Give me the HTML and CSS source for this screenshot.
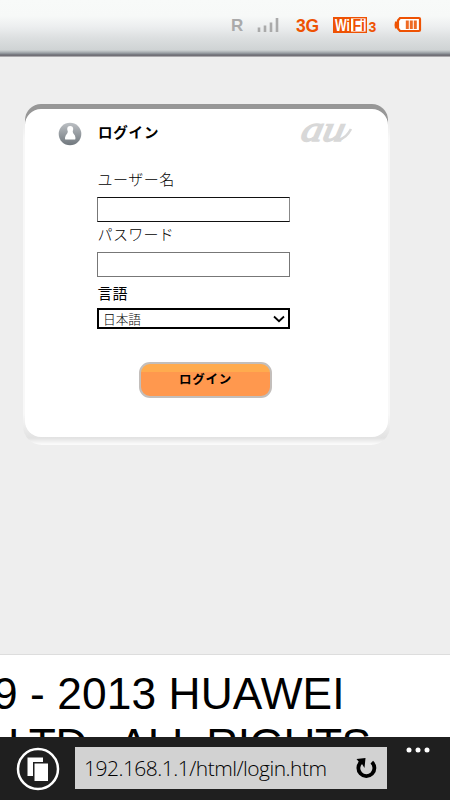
FILE: index.html
```html
<!DOCTYPE html>
<html lang="ja">
<head>
<meta charset="utf-8">
<title>ログイン</title>
<link rel="stylesheet" href="styles.css">
</head>
<body>
<header class="status">
  <span class="roam">R</span>
  <svg class="signal" width="22" height="16" viewBox="0 0 22 16"><path d="M2 10.500V15M8 8.500V15M14 5.500V15M20 1V15" stroke="#aaa" stroke-width="2.600"/></svg>
  <span class="network">3G</span>
  <svg class="wifi" width="44" height="18" viewBox="0 0 44 18">
    <rect x=".7" y="1.700" width="32.600" height="14.600" fill="#fff" stroke="#ee5203" stroke-width="1.400"/>
    <rect x="1" y="2" width="17" height="14" fill="#ee5203"/>
    <text x="2" y="14.500" textLength="15" lengthAdjust="spacingAndGlyphs" class="wifi-text light">Wi</text>
    <text x="19.500" y="14.500" textLength="12.500" lengthAdjust="spacingAndGlyphs" class="wifi-text">Fi</text>
    <text x="35.500" y="16" class="wifi-count">3</text>
  </svg>
  <svg class="battery" width="28" height="18" viewBox="0 0 28 18"><path d="M1 5.500h3v7H1q-1-3.500 0-7z" fill="#ee5203"/><path d="M6 2h19q1 0 1 1v11q0 1-1 1H6l-2-2.500v-8z" fill="#fff" stroke="#ee5203" stroke-width="2.200"/><path d="M13.300 4.500v8.500M17.300 4.500v8.500M21.300 4.500v8.500" stroke="#ee6a25" stroke-width="3"/></svg>
</header>
<main class="page">
  <section class="card">
    <div class="panel">
      <div class="heading">
        <svg class="user" width="24" height="24" viewBox="0 0 24 24"><defs><linearGradient id="ug" x2="0" y2="1"><stop stop-color="#bcc0c4"/><stop offset="1" stop-color="#70777d"/></linearGradient></defs><circle cx="12" cy="12" r="11.300" fill="url(#ug)"/><circle cx="12.200" cy="7" r="3" fill="#fff"/><path d="M10 8h4.400q0 3 2.500 5.500.8 2 .3 4H7.200q-.5-2 .5-4Q10.200 11 10 8z" fill="#fff"/></svg>
        <h1>ログイン</h1>
        <svg class="logo" width="56" height="26" viewBox="0 0 56 26"><g transform="skewX(-12)"><text x="5" y="20.500" textLength="43" lengthAdjust="spacingAndGlyphs" class="logo-text">au</text></g><path d="M40 19.500q7-1 12-10.500" fill="none" stroke="#d8d8d8" stroke-width="2.600"/></svg>
      </div>
      <form class="form">
        <label class="lbl name">ユーザー名</label>
        <div class="field first"></div>
        <label class="lbl pass">パスワード</label>
        <div class="field second"></div>
        <label class="lbl lang">言語</label>
        <div class="select"><span>日本語</span><svg width="12" height="8" viewBox="0 0 12 8"><path d="M1 1.500l5 4.700 5-4.700" fill="none" stroke="#000" stroke-width="1.800"/></svg></div>
      </form>
      <div class="button">ログイン</div>
    </div>
  </section>
</main>
<footer class="copyright">
  <div class="line one">9 - 2013 HUAWEI</div>
  <div class="line two"><span>LTD.</span><span>ALL RIGHTS</span></div>
</footer>
<nav class="browser">
  <svg class="tabs" width="44" height="44" viewBox="0 0 44 44"><circle cx="22" cy="22" r="20" fill="none" stroke="#fff" stroke-width="2.500"/><path d="M11.500 10.500H27V15H17v14h-5.500z" fill="#fff"/><path d="M18.500 16.500H32V34H18.500z" fill="#fff"/></svg>
  <div class="address"><span>192.168.1.1/html/login.htm</span>
    <svg width="22" height="22" viewBox="0 0 22 22"><path d="M16.800 5.200A8 8 0 1 1 6.200 5" fill="none" stroke="#000" stroke-width="3.800"/><path d="M1.500 2L10.500 1 9.500 11 7 7 4 5z" fill="#000"/></svg>
  </div>
  <svg class="more" width="26" height="8" viewBox="0 0 26 8"><g fill="#fff"><circle cx="4" cy="4" r="2.500"/><circle cx="13" cy="4" r="2.500"/><circle cx="22" cy="4" r="2.500"/></g></svg>
</nav>
</body>
</html>
```
FILE: styles.css
```css
* { box-sizing: border-box; }
body { margin: 0; width: 450px; height: 800px; overflow: hidden; display: flex; flex-direction: column; background: #eee; color: #000; font-family: "Liberation Sans", "Noto Sans CJK JP", sans-serif; }
svg { display: block; flex: none; }
.status { height: 57px; flex: none; display: flex; align-items: flex-start; padding: 16px 0 0 231px; background: linear-gradient(#f8faf9 0, #f7f9f8 16px, #eceeef 27px, #dcdfe0 38px, #cfd3d4 50px, #aeb3b6 52px, #858a90 54px, #6c6a72 55px, #77757b 56px, #ddd 57px); }
.roam { width: 26px; font: bold 17px/20px "Liberation Sans", sans-serif; color: #aaa; }
.signal { margin-top: 1px; }
.network { margin-left: 17px; width: 37px; font: bold 17.5px/20px "Liberation Sans", sans-serif; color: #ee5203; letter-spacing: -.3px; }
.wifi-text { font: bold 16px "Liberation Sans", sans-serif; fill: #ee5203; }
.wifi-text.light { fill: #fff; }
.wifi-count { font: bold 14px "Liberation Sans", sans-serif; fill: #ee5203; }
.battery { margin-left: 17px; }
.page { height: 598px; flex: none; padding: 47px 0 0 23px; border-bottom: 1px solid #ddd; }
.card { width: 367px; height: 341px; padding: 0 2px; border-radius: 19px; background: linear-gradient(#eee 0, #eee 20px, #f8f8f8 35px, #f8f8f8 310px, #e2e2e2 334px, #fafafa 340px); }
.panel { height: 333px; padding-top: 12px; background: #fff; border-radius: 16px; box-shadow: inset 0 5px 0 #979797; }
.heading { height: 36px; display: flex; padding-left: 33px; }
.user { margin-top: 6px; }
h1 { margin: 0 0 0 16px; width: 201px; font: bold 14.500px/32px "Noto Sans CJK JP", sans-serif; letter-spacing: .8px; }
.logo { margin-top: 4px; }
.logo-text { font: italic 36px "Liberation Serif", serif; fill: #d8d8d8; stroke: #d8d8d8; stroke-width: 1.500px; }
.form { margin-left: 72px; width: 193px; }
.lbl { display: block; padding-left: .6px; font: 300 15px/22px "Noto Sans CJK JP", sans-serif; white-space: nowrap; }
.name { padding-top: 16px; height: 45px; letter-spacing: .5px; }
.field { width: 193px; height: 25px; border: 1px solid #111; background: #fff; }
.first { border-right-color: #888; border-left-color: #777; }
.pass { height: 30px; padding-top: 1px; letter-spacing: .3px; }
.second { border-color: #777; }
.lang { height: 31px; padding-top: 5px; font-weight: 400; }
.select { width: 193px; height: 21px; padding: 0 3px 0 4px; border: 2px solid #000; display: flex; align-items: center; justify-content: space-between; font: 300 12.700px/17px "Noto Sans CJK JP", sans-serif; }
.button { width: 133px; height: 36px; margin: 33px 0 0 114px; border: 2px solid #c3bebb; border-radius: 11px; background: linear-gradient(#ffab4e 0, #ffab4e 8px, #ff984e 8px); text-align: center; font: bold 12.500px/30px "Noto Sans CJK JP", sans-serif; letter-spacing: .7px; }
.copyright { height: 82px; flex: none; padding-top: 13px; background: #fff; overflow: hidden; }
.line { font: 44.300px/51px "Liberation Sans", sans-serif; white-space: nowrap; }
.one { margin-left: -7px; letter-spacing: .080px; }
.two { display: flex; gap: 20px; margin-left: 8px; letter-spacing: -.500px; }
.browser { height: 63px; flex: none; display: flex; padding: 10px 0 0 16px; background: #1f1f1f; }
.address { width: 312px; height: 42px; margin-left: 15px; padding: 0 10px 0 9px; background: #d2d2d2; display: flex; align-items: center; justify-content: space-between; font: 300 21px/40px "Open Sans", sans-serif; letter-spacing: -.520px; }
.more { margin: -1px 0 0 18px; }
```
